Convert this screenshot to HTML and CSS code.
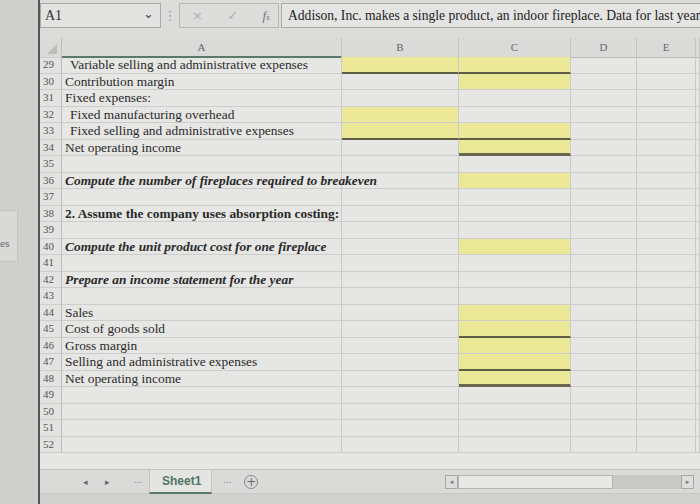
FILE: index.html
```html
<!DOCTYPE html>
<html>
<head>
<meta charset="utf-8">
<link rel="stylesheet" href="styles.css">
</head>
<body>
<div class="app">
  <div class="side">
    <div class="side-top"></div>
    <div class="side-panel"><span>es</span></div>
  </div>
  <div class="main">
    <div class="fbar">
      <div class="namebox"><span class="nb-text">A1</span><span class="chev">&#8964;</span></div>
      <span class="vdots">&#8942;</span>
      <div class="fbtns"><span class="x">&#215;</span><span class="ok">&#10003;</span><span class="fx"><i>f</i><small>x</small></span></div>
      <div class="finput">Addison, Inc. makes a single product, an indoor fireplace. Data for last year is</div>
    </div>
    <div class="sheet">
      <div class="row head">
        <div class="c rn corner"><span class="tri"></span></div>
        <div class="c ch cha">A</div>
        <div class="c ch">B</div>
        <div class="c ch">C</div>
        <div class="c ch">D</div>
        <div class="c ch">E</div>
        <div class="c ch"></div>
      </div>
      <div class="row"><div class="c rn">29</div><div class="c a in">Variable selling and administrative expenses</div><div class="c y ul"></div><div class="c y ul"></div><div class="c"></div><div class="c"></div><div class="c"></div></div>
      <div class="row"><div class="c rn">30</div><div class="c a">Contribution margin</div><div class="c"></div><div class="c y"></div><div class="c"></div><div class="c"></div><div class="c"></div></div>
      <div class="row"><div class="c rn">31</div><div class="c a">Fixed expenses:</div><div class="c"></div><div class="c"></div><div class="c"></div><div class="c"></div><div class="c"></div></div>
      <div class="row"><div class="c rn">32</div><div class="c a in">Fixed manufacturing overhead</div><div class="c y"></div><div class="c"></div><div class="c"></div><div class="c"></div><div class="c"></div></div>
      <div class="row"><div class="c rn">33</div><div class="c a in">Fixed selling and administrative expenses</div><div class="c y ul"></div><div class="c y ul"></div><div class="c"></div><div class="c"></div><div class="c"></div></div>
      <div class="row"><div class="c rn">34</div><div class="c a">Net operating income</div><div class="c"></div><div class="c y dul"></div><div class="c"></div><div class="c"></div><div class="c"></div></div>
      <div class="row"><div class="c rn">35</div><div class="c a"></div><div class="c"></div><div class="c"></div><div class="c"></div><div class="c"></div><div class="c"></div></div>
      <div class="row"><div class="c rn">36</div><div class="c a bi">Compute the number of fireplaces required to breakeven</div><div class="c"></div><div class="c y"></div><div class="c"></div><div class="c"></div><div class="c"></div></div>
      <div class="row"><div class="c rn">37</div><div class="c a"></div><div class="c"></div><div class="c"></div><div class="c"></div><div class="c"></div><div class="c"></div></div>
      <div class="row"><div class="c rn">38</div><div class="c a b">2. Assume the company uses absorption costing:</div><div class="c"></div><div class="c"></div><div class="c"></div><div class="c"></div><div class="c"></div></div>
      <div class="row"><div class="c rn">39</div><div class="c a"></div><div class="c"></div><div class="c"></div><div class="c"></div><div class="c"></div><div class="c"></div></div>
      <div class="row"><div class="c rn">40</div><div class="c a bi">Compute the unit product cost for one fireplace</div><div class="c"></div><div class="c y"></div><div class="c"></div><div class="c"></div><div class="c"></div></div>
      <div class="row"><div class="c rn">41</div><div class="c a"></div><div class="c"></div><div class="c"></div><div class="c"></div><div class="c"></div><div class="c"></div></div>
      <div class="row"><div class="c rn">42</div><div class="c a bi">Prepare an income statement for the year</div><div class="c"></div><div class="c"></div><div class="c"></div><div class="c"></div><div class="c"></div></div>
      <div class="row"><div class="c rn">43</div><div class="c a"></div><div class="c"></div><div class="c"></div><div class="c"></div><div class="c"></div><div class="c"></div></div>
      <div class="row"><div class="c rn">44</div><div class="c a">Sales</div><div class="c"></div><div class="c y"></div><div class="c"></div><div class="c"></div><div class="c"></div></div>
      <div class="row"><div class="c rn">45</div><div class="c a">Cost of goods sold</div><div class="c"></div><div class="c y ul"></div><div class="c"></div><div class="c"></div><div class="c"></div></div>
      <div class="row"><div class="c rn">46</div><div class="c a">Gross margin</div><div class="c"></div><div class="c y"></div><div class="c"></div><div class="c"></div><div class="c"></div></div>
      <div class="row"><div class="c rn">47</div><div class="c a">Selling and administrative expenses</div><div class="c"></div><div class="c y ul"></div><div class="c"></div><div class="c"></div><div class="c"></div></div>
      <div class="row"><div class="c rn">48</div><div class="c a">Net operating income</div><div class="c"></div><div class="c y dul"></div><div class="c"></div><div class="c"></div><div class="c"></div></div>
      <div class="row"><div class="c rn">49</div><div class="c a"></div><div class="c"></div><div class="c"></div><div class="c"></div><div class="c"></div><div class="c"></div></div>
      <div class="row"><div class="c rn">50</div><div class="c a"></div><div class="c"></div><div class="c"></div><div class="c"></div><div class="c"></div><div class="c"></div></div>
      <div class="row"><div class="c rn">51</div><div class="c a"></div><div class="c"></div><div class="c"></div><div class="c"></div><div class="c"></div><div class="c"></div></div>
      <div class="row"><div class="c rn">52</div><div class="c a"></div><div class="c"></div><div class="c"></div><div class="c"></div><div class="c"></div><div class="c"></div></div>
      <div class="gap"></div>
    </div>
    <div class="tabs">
      <div class="tabnav">
        <span class="arr">&#9666;</span>
        <span class="arr">&#9656;</span>
        <span class="dots">...</span>
        <span class="tab">Sheet1</span>
        <span class="dots">...</span>
        <span class="plus">+</span>
      </div>
      <div class="hscroll">
        <span class="sbtn">&#9666;</span>
        <span class="thumb"></span>
        <span class="track"></span>
        <span class="sbtn">&#9656;</span>
      </div>
    </div>
    <div class="bottom"></div>
  </div>
</div>
</body>
</html>
```
FILE: styles.css
```css
* { box-sizing: border-box; }
html, body { margin: 0; padding: 0; }
body {
  width: 700px;
  height: 504px;
  overflow: hidden;
  background: #d6d6d4;
  font-family: "Liberation Serif", "Times New Roman", serif;
  color: #2e2e2e;
}
.app {
  display: flex;
  width: 700px;
  height: 504px;
}
.side {
  width: 40px;
  flex: none;
  background: #cfcfcd;
  border-right: 2px solid #555;
  display: flex;
  flex-direction: column;
}
.side-top { height: 210px; }
.side-panel {
  width: 18px;
  height: 52px;
  background: #d9d9d7;
  border: 1px solid #c2c2c0;
  border-left: none;
  font-family: "Liberation Sans", Arial, sans-serif;
  font-size: 9px;
  color: #666;
  padding-top: 28px;
}
.main {
  flex: 1;
  display: flex;
  flex-direction: column;
  min-width: 0;
}
.fbar {
  height: 38px;
  display: flex;
  align-items: flex-start;
  padding-top: 3px;
  background: #dcdcda;
}
.namebox {
  width: 121px;
  height: 25px;
  border: 1px solid #a9a9a7;
  background: #e2e2e0;
  display: flex;
  align-items: center;
  justify-content: space-between;
  padding: 0 6px 0 4px;
  font-size: 14px;
}
.chev { font-size: 13px; color: #444; font-family: "DejaVu Sans", sans-serif; margin-top: -4px; }
.vdots { width: 18px; text-align: center; color: #999; font-size: 13px; padding-top: 5px; font-family: "DejaVu Sans", sans-serif; }
.fbtns {
  width: 100px;
  height: 25px;
  border: 1px solid #b6b6b4;
  display: flex;
  align-items: center;
  justify-content: space-between;
  padding: 0 8px 0 12px;
  color: #b0b0ae;
  font-family: "DejaVu Sans", sans-serif;
  font-size: 13px;
}
.fbtns .fx { color: #777; font-family: "Liberation Serif", serif; font-size: 13px; }
.fbtns .fx small { font-size: 8px; }
.finput {
  flex: 1;
  height: 25px;
  margin-left: 2px;
  border: 1px solid #a9a9a7;
  border-right: none;
  background: #e4e4e2;
  font-size: 13.6px;
  white-space: nowrap;
  overflow: hidden;
  padding: 4px 0 0 6px;
  color: #222;
}
.sheet {
  background: #e6e6e4;
  display: flex;
  flex-direction: column;
}
.row {
  display: grid;
  grid-template-columns: 22px 280px 117px 112px 66px 59px 1fr;
  height: 16.5px;
}
.row.head { height: 19px; background: #dadad8; }
.c {
  border-right: 1px solid #c9c9c7;
  border-bottom: 1px solid #cdcdcb;
  white-space: nowrap;
  overflow: visible;
  font-size: 13.4px;
  line-height: 15px;
  min-width: 0;
}
.rn {
  font-size: 11px;
  color: #555;
  padding-left: 3px;
  border-right: 1px solid #bdbdbb;
  background: #e3e3e1;
}
.corner { position: relative; background: #dadad8; }
.tri {
  position: absolute;
  right: 4px;
  bottom: 3px;
  width: 0; height: 0;
  border-left: 10px solid transparent;
  border-bottom: 10px solid #bcbcba;
}
.ch {
  text-align: center;
  font-size: 11px;
  line-height: 18px;
  color: #666;
  border-right: 1px solid #c4c4c2;
  border-bottom: 1px solid #b8b8b6;
}
.cha { border-bottom: 2px solid #5c7868; }
.a { padding-left: 3px; color: #2a2a2a; }
.in { padding-left: 8px; }
.b { font-weight: bold; }
.bi { font-weight: bold; font-style: italic; }
.y { background: #ebe997; }
.ul { border-bottom: 2px solid #5e5b47; }
.dul { border-bottom: 3px solid #6a6650; }
.gap {
  height: 17px;
  border-bottom: 1px solid #c4c4c2;
}
.tabs {
  height: 24px;
  display: flex;
  background: #dadad8;
  border-bottom: 1px solid #c8c8c6;
}
.tabnav {
  width: 405px;
  display: flex;
  align-items: center;
  padding-left: 43px;
  font-family: "Liberation Sans", Arial, sans-serif;
  font-size: 11px;
  color: #777;
}
.arr { width: 22px; font-size: 9px; font-family: "DejaVu Sans", sans-serif; color: #666; }
.dots { width: 22px; font-size: 10px; color: #888; text-align: center; margin-top: -4px; }
.tab {
  height: 24px;
  padding: 4px 10px 0 12px;
  background: #e4e4e2;
  border-left: 1px solid #c4c4c2;
  border-right: 1px solid #c4c4c2;
  border-bottom: 2px solid #5c7868;
  color: #4f7563;
  font-weight: bold;
  font-size: 12px;
  margin-right: 4px;
}
.plus {
  width: 14px; height: 14px;
  border: 1px solid #888;
  border-radius: 50%;
  font-size: 12px;
  line-height: 12px;
  text-align: center;
  color: #666;
  margin-left: 6px;
  font-family: "DejaVu Sans", sans-serif;
}
.hscroll {
  flex: 1;
  display: flex;
  align-items: center;
  padding-right: 6px;
}
.sbtn {
  width: 13px;
  height: 14px;
  border: 1px solid #a8a8a6;
  background: #dededc;
  font-size: 7px;
  color: #777;
  text-align: center;
  line-height: 12px;
  font-family: "DejaVu Sans", sans-serif;
}
.thumb {
  width: 155px;
  height: 14px;
  background: #e8e8e6;
  border: 1px solid #b4b4b2;
}
.track {
  flex: 1;
  height: 14px;
  background: #c9c9c7;
}
.bottom { flex: 1; background: #d0d0ce; }
```
